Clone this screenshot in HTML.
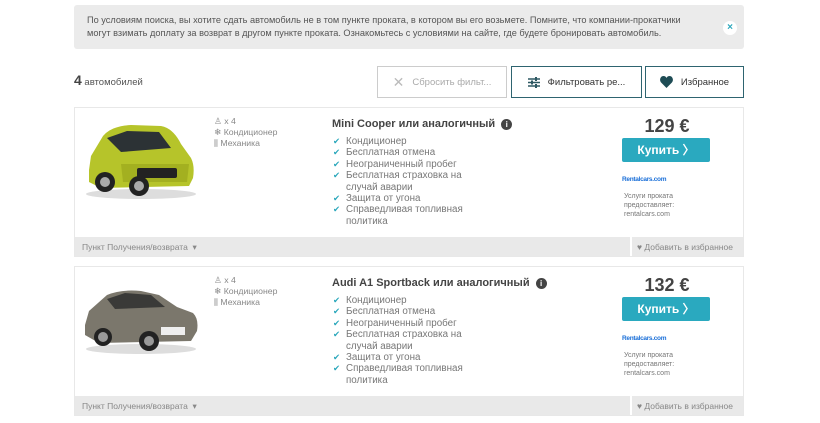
<!DOCTYPE html>
<html><head><meta charset="utf-8"><style>
*{margin:0;padding:0;box-sizing:border-box}
body{width:820px;height:423px;background:#fff;font-family:"Liberation Sans","DejaVu Sans",sans-serif;position:relative;overflow:hidden;color:#555}
.abs{position:absolute}
.alert{left:74px;top:5px;width:670px;height:44px;background:#ebebeb;border-radius:3px;font-size:9.2px;color:#555;line-height:13px;padding:9px 0 0 13px}
.x{left:723px;top:21px;width:14px;height:14px;border-radius:50%;background:#fff;color:#2aa7bb;font-size:10px;font-weight:bold;text-align:center;line-height:14px}
.btn{top:66px;height:32px;border:1px solid #2e6470;font-size:9.5px;color:#333;display:flex;align-items:center;justify-content:center;gap:8px}
.card{left:74px;width:670px;height:150px;border:1px solid #e8e8e8}
.foot{position:absolute;left:0;bottom:0;width:668px;height:19px;background:#e9e9e9;font-size:8.5px;color:#888}
.spec{font-size:8.7px;color:#888;line-height:11px}
.title{font-size:11px;font-weight:bold;color:#444}
.feat{font-size:9.8px;color:#777;line-height:11.4px;list-style:none}
.feat li{padding-left:13px;position:relative}
.feat li:before{content:"✔";position:absolute;left:0;color:#2aa7bb;font-size:8.5px}
.price{font-size:18px;font-weight:bold;color:#444;width:90px;text-align:center}
.buy{width:88px;height:24px;background:#2aa9bf;border-radius:2px;color:#fff;font-weight:bold;font-size:12px;text-align:center;line-height:24px}
.logo{font-size:6.5px;color:#1a6fd8;font-weight:bold;letter-spacing:-.3px}
.prov{font-size:7px;color:#777;line-height:9px}
</style></head><body>
<div class="abs alert">По условиям поиска, вы хотите сдать автомобиль не в том пункте проката, в котором вы его возьмете. Помните, что компании-прокатчики<br>могут взимать доплату за возврат в другом пункте проката. Ознакомьтесь с условиями на сайте, где будете бронировать автомобиль.</div>
<div class="abs x">×</div>
<div class="abs" style="left:74px;top:72px;font-size:9.5px;color:#555"><b style="font-size:14px;color:#444">4</b> автомобилей</div>
<div class="abs btn" style="left:377px;width:130px;border-color:#ccc;color:#aaa"><span style="font-size:14px;color:#bbb">✕</span>Сбросить фильт...</div>
<div class="abs btn" style="left:511px;width:131px"><svg width="12" height="11" viewBox="0 0 12 11"><g stroke="#2e5963" stroke-width="1.4"><path d="M0 2h12M0 5.5h12M0 9h12"/></g><g fill="#2e5963"><rect x="7" y="0" width="2" height="4"/><rect x="3" y="3.5" width="2" height="4"/><rect x="7" y="7" width="2" height="4"/></g></svg>Фильтровать ре...</div>
<div class="abs btn" style="left:645px;width:99px"><svg width="13" height="12" viewBox="0 0 24 22"><path d="M12 22L2 12C-2 7 1 0 6.5 0 9 0 11 1.5 12 3.5 13 1.5 15 0 17.5 0 23 0 26 7 22 12z" fill="#1e4c55"/></svg>Избранное</div>

<!-- card 1 -->
<div class="abs card" style="top:107px">
<svg class="abs" style="left:6px;top:12px" width="120" height="80" viewBox="0 0 120 80">
<ellipse cx="60" cy="74" rx="55" ry="5" fill="#ddd"/>
<path d="M8 50 L10 36 L22 16 Q30 6 50 5 L80 6 Q92 8 100 24 L110 38 Q114 46 112 58 L108 66 L20 68 L8 62z" fill="#b6c42a"/>
<path d="M26 18 L46 11 L78 12 L90 28 L40 32z" fill="#2c3235"/>
<path d="M40 44 L108 44 L106 62 L42 62z" fill="#a3b020"/>
<rect x="56" y="48" width="40" height="10" rx="2" fill="#222"/>
<circle cx="24" cy="62" r="10" fill="#222"/><circle cx="24" cy="62" r="5" fill="#aaa"/>
<circle cx="58" cy="66" r="10" fill="#222"/><circle cx="58" cy="66" r="5" fill="#aaa"/>
</svg>
<div class="abs spec" style="left:139px;top:8px">♙ x 4<br>❄ Кондиционер<br>⫼ Механика</div>
<div class="abs title" style="left:257px;top:10px">Mini Cooper или аналогичный <span style="display:inline-block;width:11px;height:11px;border-radius:50%;background:#444;color:#fff;font-size:8px;text-align:center;line-height:11px;margin-left:3px">i</span></div>
<ul class="abs feat" style="left:258px;top:28px;width:140px">
<li>Кондиционер</li><li>Бесплатная отмена</li><li>Неограниченный пробег</li><li>Бесплатная страховка на случай аварии</li><li>Защита от угона</li><li>Справедливая топливная политика</li></ul>
<div class="abs price" style="left:547px;top:8px">129 €</div>
<div class="abs buy" style="left:547px;top:30px">Купить 〉</div>
<div class="abs logo" style="left:547px;top:68px">Rentalcars.com</div>
<div class="abs prov" style="left:549px;top:84px">Услуги проката<br>предоставляет:<br>rentalcars.com</div>
<div class="foot"><span class="abs" style="left:7px;top:5px">Пункт Получения/возврата &nbsp;▾</span><div class="abs" style="left:555px;top:0;width:2px;height:19px;background:#fff"></div><span class="abs" style="left:562px;top:5px">♥ Добавить в избранное</span></div>
</div>

<!-- card 2 -->
<div class="abs card" style="top:266px">
<svg class="abs" style="left:6px;top:18px" width="120" height="70" viewBox="0 0 120 70">
<ellipse cx="60" cy="64" rx="55" ry="5" fill="#ddd"/>
<path d="M4 40 L8 26 L26 10 Q40 4 60 6 L78 10 L96 22 L112 28 Q118 34 116 46 L110 56 L18 58 L4 50z" fill="#7b776c"/>
<path d="M26 14 L44 8 L70 10 L84 22 L34 24z" fill="#3a3a38"/>
<rect x="80" y="42" width="24" height="8" fill="#eee"/>
<circle cx="22" cy="52" r="9" fill="#222"/><circle cx="22" cy="52" r="5" fill="#999"/>
<circle cx="68" cy="56" r="10" fill="#222"/><circle cx="68" cy="56" r="5" fill="#999"/>
</svg>
<div class="abs spec" style="left:139px;top:8px">♙ x 4<br>❄ Кондиционер<br>⫼ Механика</div>
<div class="abs title" style="left:257px;top:10px">Audi A1 Sportback или аналогичный <span style="display:inline-block;width:11px;height:11px;border-radius:50%;background:#444;color:#fff;font-size:8px;text-align:center;line-height:11px;margin-left:3px">i</span></div>
<ul class="abs feat" style="left:258px;top:28px;width:140px">
<li>Кондиционер</li><li>Бесплатная отмена</li><li>Неограниченный пробег</li><li>Бесплатная страховка на случай аварии</li><li>Защита от угона</li><li>Справедливая топливная политика</li></ul>
<div class="abs price" style="left:547px;top:8px">132 €</div>
<div class="abs buy" style="left:547px;top:30px">Купить 〉</div>
<div class="abs logo" style="left:547px;top:68px">Rentalcars.com</div>
<div class="abs prov" style="left:549px;top:84px">Услуги проката<br>предоставляет:<br>rentalcars.com</div>
<div class="foot"><span class="abs" style="left:7px;top:5px">Пункт Получения/возврата &nbsp;▾</span><div class="abs" style="left:555px;top:0;width:2px;height:19px;background:#fff"></div><span class="abs" style="left:562px;top:5px">♥ Добавить в избранное</span></div>
</div>
</body></html>
